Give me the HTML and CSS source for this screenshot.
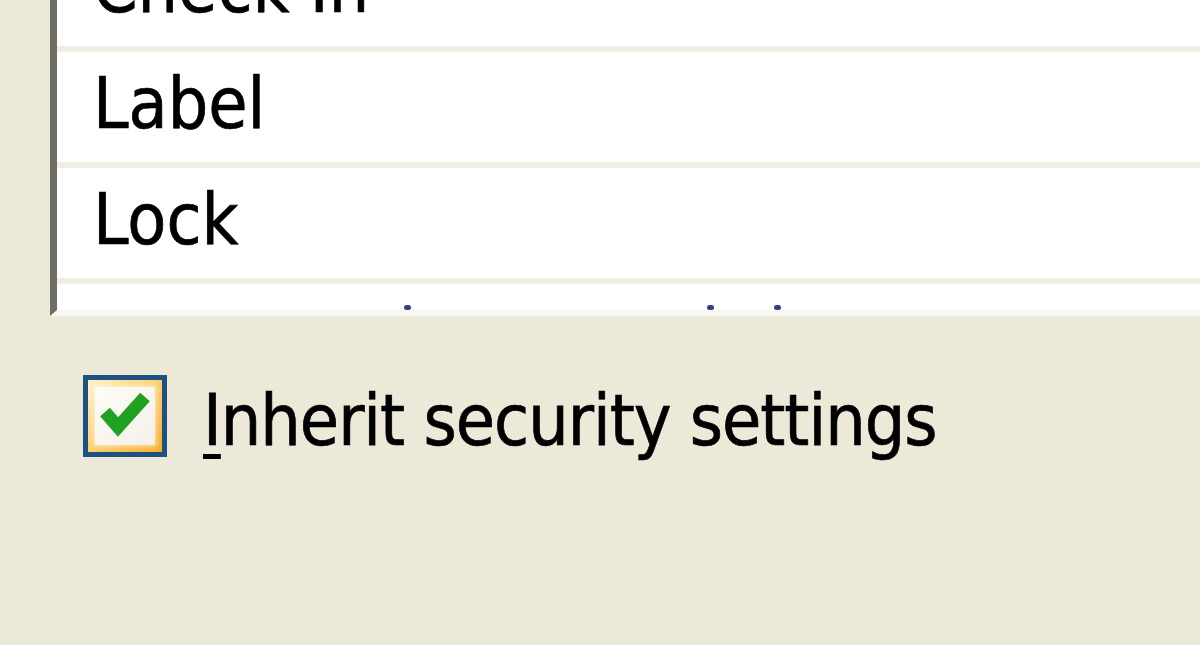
FILE: index.html
```html
<!DOCTYPE html>
<html lang="en">
<head>
<meta charset="utf-8">
<title>Security</title>
<link rel="stylesheet" href="styles.css">
</head>
<body>
<div class="listbox">
  <ul class="rows">
    <li class="row">Check In</li>
    <li class="row">Label</li>
    <li class="row">Lock</li>
    <li class="row row-partial"><span class="dot dot-a"></span><span class="dot dot-b"></span><span class="dot dot-c"></span></li>
  </ul>
</div>
<label class="option">
  <span class="cb">
    <span class="cb-inner">
      <svg class="tick" viewBox="0 0 74 72" width="74" height="72" aria-hidden="true">
        <path d="M17 32 L30 47 L57 17" fill="none" stroke="#21a121" stroke-width="13" stroke-linecap="butt" stroke-linejoin="miter"/>
      </svg>
    </span>
  </span>
  <span class="option-text"><span class="accel">I</span>nherit security settings</span>
</label>
</body>
</html>
```
FILE: styles.css
```css
html, body {
  margin: 0;
  padding: 0;
}
body {
  background: #ece9d8;
  width: 1200px;
  height: 645px;
  overflow: hidden;
  font-family: "DejaVu Sans Condensed", "DejaVu Sans", "Liberation Sans", sans-serif;
  font-size: 71px;
  color: #000;
  -webkit-text-stroke: 0.7px #000;
}
.listbox {
  margin-left: 50px;
  height: 310px;
  overflow: hidden;
  background: #fff;
  border-left: 7px solid #6f6d63;
  border-bottom: 6px solid #f8f7f1;
}
.rows {
  list-style: none;
  margin: -64px 0 0 0;
  padding: 0;
}
.row {
  box-sizing: border-box;
  height: 116px;
  padding: 10px 0 0 36px;
  line-height: 83px;
  border-bottom: 6px solid #f0eee4;
  white-space: nowrap;
}
.row-partial {
  position: relative;
}
.dot {
  position: absolute;
  top: 21px;
  width: 7px;
  height: 5px;
  border-radius: 3px;
  background: #3c3a8a;
}
.dot-a { left: 347px; }
.dot-b { left: 650px; }
.dot-c { left: 717px; }
.option {
  display: flex;
  align-items: flex-start;
  margin-top: 59px;
  padding-left: 83px;
}
.cb {
  box-sizing: border-box;
  width: 84px;
  height: 82px;
  border: 5px solid #1c5180;
  padding: 7px;
  background: linear-gradient(135deg, #fff3cc 0%, #fcd37a 45%, #f6ad2e 100%);
  flex: none;
}
.cb-inner {
  display: block;
  width: 60px;
  height: 58px;
  background: linear-gradient(135deg, #fdfcf6 0%, #f3f1e8 100%);
  box-shadow: 0 0 4px 2px rgba(255, 250, 235, 0.5);
  position: relative;
}
.tick {
  position: absolute;
  left: -7px;
  top: -7px;
}
.option-text {
  margin-left: 36px;
  margin-top: 4px;
  line-height: 83px;
  letter-spacing: -1px;
  white-space: nowrap;
}
.accel {
  text-decoration: underline;
  text-decoration-thickness: 5px;
  text-underline-offset: 9px;
}
```
